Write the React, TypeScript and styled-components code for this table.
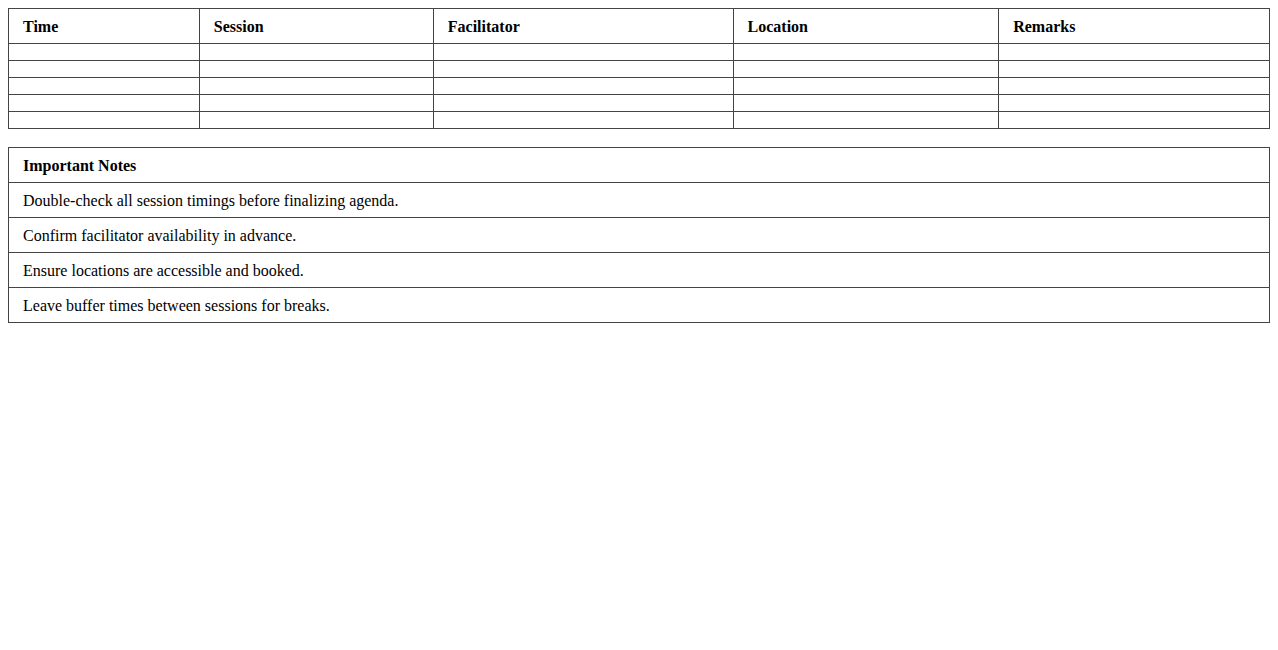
import React from 'react';
import styled, { createGlobalStyle } from 'styled-components';

const GlobalStyle = createGlobalStyle`
  body {
    margin: 8px;
    background: #ffffff;
    font-family: "Liberation Serif", "Times New Roman", serif;
    font-size: 16px;
    color: #000;
  }
`;

const Table = styled.table`
  width: 100%;
  border-collapse: collapse;
  margin-bottom: 18px;
`;

const HeadCell = styled.th`
  border: 1px solid #444;
  padding: 9px 14px 7px;
  text-align: left;
  font-weight: bold;
`;

const Cell = styled.td`
  border: 1px solid #444;
  padding: 9px 14px 7px;
  text-align: left;
`;

const columns = ['Time', 'Session', 'Facilitator', 'Location', 'Remarks'];

const notes = [
  'Double-check all session timings before finalizing agenda.',
  'Confirm facilitator availability in advance.',
  'Ensure locations are accessible and booked.',
  'Leave buffer times between sessions for breaks.',
];

export default function App() {
  return (
    <>
      <GlobalStyle />
      <Table>
        <thead>
          <tr>
            {columns.map((c) => (
              <HeadCell key={c}>{c}</HeadCell>
            ))}
          </tr>
        </thead>
        <tbody>
          {[0, 1, 2, 3, 4].map((r) => (
            <tr key={r}>
              {columns.map((c) => (
                <Cell key={c}></Cell>
              ))}
            </tr>
          ))}
        </tbody>
      </Table>
      <Table>
        <thead>
          <tr>
            <HeadCell>Important Notes</HeadCell>
          </tr>
        </thead>
        <tbody>
          {notes.map((n) => (
            <tr key={n}>
              <Cell>{n}</Cell>
            </tr>
          ))}
        </tbody>
      </Table>
    </>
  );
}
